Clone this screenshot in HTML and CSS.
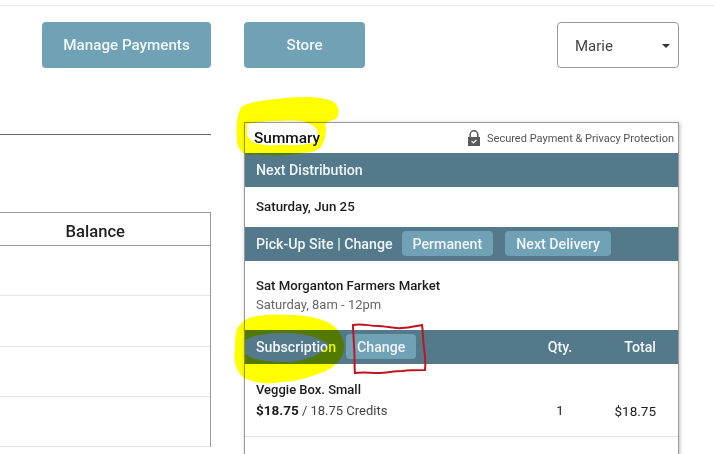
FILE: index.html
```html
<!DOCTYPE html>
<html lang="en">
<head>
    <meta charset="UTF-8">
    <title>Summary</title>
    <link rel="stylesheet" href="styles.css">
</head>
<body>
    <div class="topline"></div>

    <div class="toolbar">
        <a class="btn btn-manage">Manage Payments</a>
        <a class="btn btn-store">Store</a>
        <div class="select">
            <span>Marie</span>
            <i class="caret"></i>
        </div>
    </div>

    <div class="content">
        <div class="left-col">
            <div class="divider"></div>
            <div class="balance-table">
                <div class="balance-head">Balance</div>
                <div class="balance-row"></div>
                <div class="balance-row"></div>
                <div class="balance-row"></div>
                <div class="balance-row"></div>
            </div>
        </div>

        <div class="card">
            <div class="card-title">
                <h2>Summary</h2>
                <div class="secure">
                    <svg class="lock" width="14" height="16" viewBox="0 0 14 16">
                        <path d="M3.2 7.5V4.6a3.8 3.8 0 0 1 7.6 0V7.5" fill="none" stroke="#5a5a5a" stroke-width="1.5"/>
                        <rect x="1" y="7" width="12" height="9" fill="#5a5a5a"/>
                        <path d="M4.6 11.2l1.8 1.8 3-3" fill="none" stroke="#fff" stroke-width="1.2"/>
                    </svg>
                    <span>Secured Payment &amp; Privacy Protection</span>
                </div>
            </div>

            <div class="bar"><span>Next Distribution</span></div>
            <div class="date-row">Saturday, Jun 25</div>

            <div class="bar">
                <span>Pick-Up Site | Change</span>
                <a class="chip chip-first">Permanent</a>
                <a class="chip">Next Delivery</a>
            </div>
            <div class="site-row">
                <div class="site-name">Sat Morganton Farmers Market</div>
                <div class="site-time">Saturday, 8am - 12pm</div>
            </div>

            <div class="bar">
                <span>Subscription</span>
                <a class="chip chip-change">Change</a>
                <span class="col-qty">Qty.</span>
                <span class="col-total">Total</span>
            </div>
            <div class="item-row">
                <div class="item-name">Veggie Box. Small</div>
                <div class="item-price"><b>$18.75</b> / 18.75 Credits</div>
                <div class="col-qty">1</div>
                <div class="col-total item-total">$18.75</div>
            </div>
            <div class="card-rest"></div>
        </div>
    </div>

    <!-- marks drawn by hand over the screenshot -->
    <svg class="scribbles" width="714" height="454" viewBox="0 0 714 454">
        <path class="marker" fill-rule="evenodd" d="M241 107C250 101 268 100 285 98C305 96 328 97 335 103C340 108 339 115 337 118C333 121 328 120 325 124C327 130 326 140 320 148C314 152 308 153 302 153C285 156 270 156 255 154C250 155 246 155 243 153C238 148 236 143 237 138C236 130 236 118 241 107ZM247 124C256 122 268 121 278 121C290 120 304 120 310 124C316 127 319 131 318 135C317 139 316 142 313 143C300 146 290 145 278 145C270 146 262 145 255 143C251 141 247 137 247 133Z"/>
        <path class="marker" fill-rule="evenodd" d="M237 329C241 322 246 319 252 317C265 314 277 314 289 315C302 315 314 317 322 320C331 323 336 327 339 332C343 338 345 344 344 349C343 356 340 361 335 365C329 370 322 373 315 375C304 379 293 382 282 382C272 384 261 384 252 381C244 379 240 375 237 369C234 362 234 355 235 349C235 342 235 335 237 329ZM245 340C252 335 268 333 285 333C305 333 322 338 329 345C322 354 305 362 285 362C268 362 252 360 245 354Z"/>
        <path class="pen" d="M353 325C361 323 369 326 378 326C386 326 394 329 402 328C409 328 416 326 422 325C423 332 423 340 424 348C425 356 426 363 425 370C418 370 410 370 402 371C394 371 386 373 378 373C370 373 362 372 355 373C354 364 355 356 354 348C354 340 353 332 353 325Z"/>
    </svg>
</body>
</html>
```

FILE: styles.css
```css
html, body {
    margin: 0;
    height: 454px;
    overflow: hidden;
}

body {
    position: relative;
    background: #fff;
    font-family: 'Roboto', 'Liberation Sans', sans-serif;
    color: #1c1c1c;
}

.topline {
    height: 5px;
    border-bottom: 1px solid #e9e9e9;
}

.toolbar {
    display: flex;
    margin-top: 16px;
    padding-left: 42px;
    padding-right: 35px;
}

.btn {
    display: flex;
    align-items: center;
    justify-content: center;
    height: 46px;
    border-radius: 4px;
    background: #71a1b5;
    color: #f1f8fb;
    font-size: 15.2px;
    font-weight: 500;
}

.btn-manage {
    width: 169px;
    margin-right: 33px;
}

.btn-store {
    width: 121px;
}

.select {
    display: flex;
    align-items: center;
    justify-content: space-between;
    box-sizing: border-box;
    width: 122px;
    height: 46px;
    margin-left: auto;
    padding: 2px 8px 0 17px;
    border: 1px solid #999;
    border-radius: 4px;
    color: #444;
    font-size: 15px;
}

.caret {
    width: 0;
    height: 0;
    border-left: 4px solid transparent;
    border-right: 4px solid transparent;
    border-top: 4px solid #333;
}

.content {
    display: flex;
    gap: 33px;
    margin-top: 54px;
}

.left-col {
    width: 211px;
    padding-top: 12px;
}

.divider {
    height: 1px;
    background: #666;
}

.balance-table {
    margin-top: 77px;
    border-top: 1px solid #999;
    border-right: 1px solid #999;
}

.balance-head {
    height: 32px;
    padding-right: 85px;
    border-bottom: 1px solid #999;
    color: #222;
    font-size: 16.6px;
    font-weight: 500;
    line-height: 37px;
    text-align: right;
}

.balance-row {
    height: 49.3px;
    border-bottom: 1px solid #e4e4e4;
}

.card {
    box-sizing: border-box;
    width: 435px;
    height: 340px;
    border: 1px solid #999;
    border-bottom: none;
    box-shadow: 1px 1px 4px rgba(0, 0, 0, 0.25);
}

.card-title {
    display: flex;
    align-items: center;
    justify-content: space-between;
    height: 30px;
    padding: 0 4px 0 9px;
}

.card-title h2 {
    margin: 0;
    font-size: 15.4px;
    font-weight: 500;
    color: #111;
}

.secure {
    display: flex;
    align-items: center;
    gap: 6px;
    padding-top: 1px;
    color: #555;
    font-size: 11px;
}

.lock {
    margin-top: -1px;
}

.bar {
    display: flex;
    align-items: center;
    height: 34px;
    padding: 0 22px 0 11px;
    background: #54798a;
    color: #eef6f9;
    font-size: 14.2px;
    font-weight: 500;
}

.chip {
    display: flex;
    align-items: center;
    height: 25px;
    margin-top: -1px;
    margin-left: 12px;
    padding: 0 11px;
    border-radius: 4px;
    background: #71a1b5;
    color: #eef6f9;
}

.chip-first {
    margin-left: 9px;
}

.chip-change {
    margin-left: 10px;
    margin-right: auto;
}

.col-qty {
    width: 50px;
    text-align: center;
}

.col-total {
    width: 71px;
    text-align: right;
}

.date-row {
    height: 40px;
    padding-left: 11px;
    font-size: 13.3px;
    font-weight: 500;
    line-height: 40px;
}

.site-row {
    box-sizing: border-box;
    height: 69px;
    padding: 16px 11px 0;
}

.site-name {
    font-size: 13.2px;
    font-weight: 500;
    line-height: 17px;
}

.site-time {
    margin-top: 2px;
    color: #666;
    font-size: 13px;
    line-height: 17px;
}

.item-row {
    display: grid;
    grid-template-columns: 1fr 50px 71px;
    align-items: center;
    align-content: start;
    row-gap: 4px;
    box-sizing: border-box;
    height: 73px;
    padding: 17px 22px 0 11px;
    border-bottom: 1px solid #e4e4e4;
    font-size: 13px;
}

.item-name {
    grid-column: 1 / -1;
    font-weight: 500;
    line-height: 17px;
}

.item-price {
    color: #444;
    line-height: 17px;
}

.item-price b {
    color: #1c1c1c;
    font-size: 13.5px;
}

.item-total {
    font-size: 13.5px;
}

.scribbles {
    position: absolute;
    top: 0;
    left: 0;
    pointer-events: none;
}

.marker {
    fill: #ffff00;
    mix-blend-mode: multiply;
}

.pen {
    fill: none;
    stroke: #c0151f;
    stroke-width: 2;
}
```
